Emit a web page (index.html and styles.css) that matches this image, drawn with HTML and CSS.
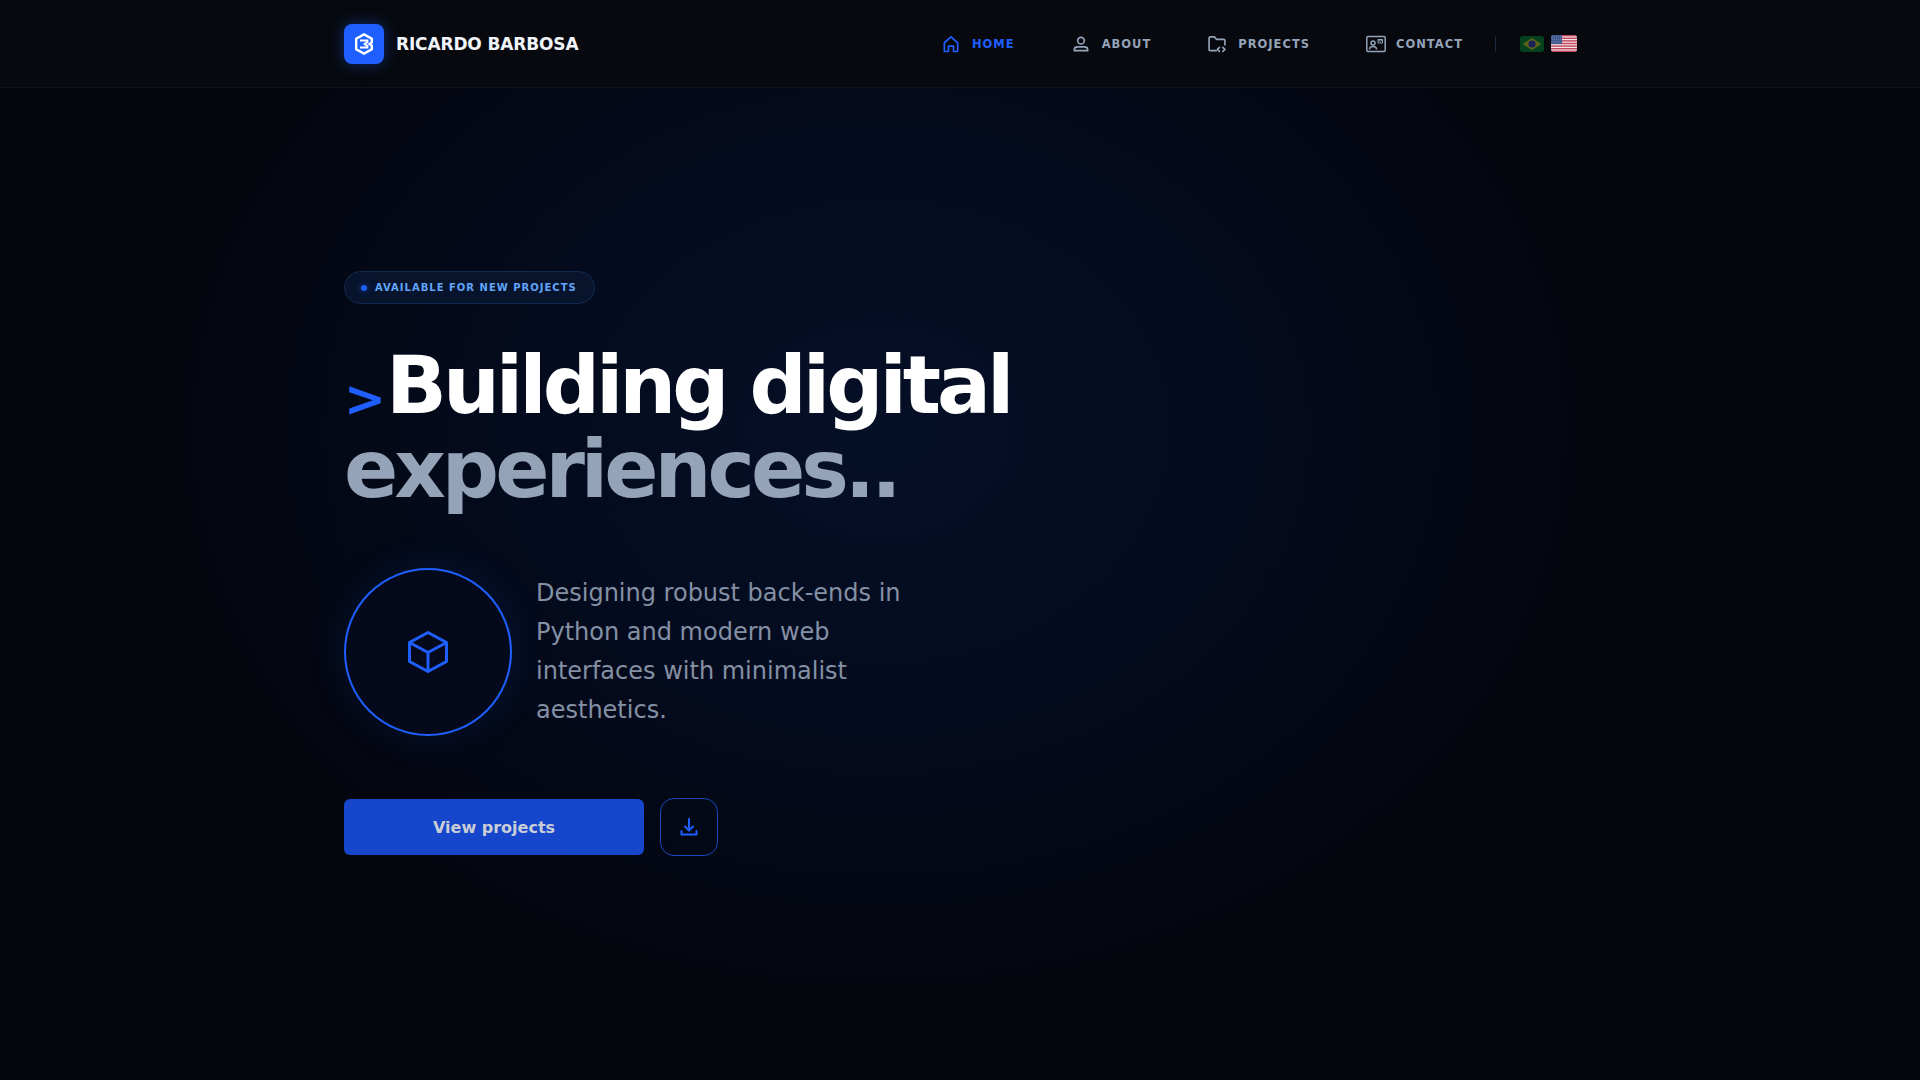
FILE: index.html
```html
<!DOCTYPE html>
<html lang="en">
  <head>
    <meta charset="UTF-8" />
    <meta name="viewport" content="width=device-width, initial-scale=1" />
    <title>Ricardo Barbosa</title>
    <link rel="stylesheet" href="styles.css">
  </head>
  <body>
    <header class="site-header">
      <div class="header-inner">
        <a class="brand">
          <span class="brand-logo">
            <svg width="24" height="24" viewBox="0 0 24 24" fill="none" stroke="white" stroke-width="2.4" stroke-linejoin="miter">
              <path d="M12 2.4 L19.8 6.8 V10.4 L17.4 12 L19.8 13.6 V17.2 L12 21.6 L4.2 17.2 V6.8 Z" />
              <path d="M8 8.6 H15.4 V10 L12.6 12 L15.4 14 V15.4 H8" stroke-width="2" />
            </svg>
          </span>
          <span class="brand-name">RICARDO BARBOSA</span>
        </a>

        <nav class="main-nav">
          <a class="nav-link active">
            <svg class="nav-icon" width="20" height="20" viewBox="0 0 24 24" fill="none" stroke="currentColor" stroke-width="2" stroke-linejoin="round">
              <path d="M4 10.5 L12 3.5 L20 10.5 V20 Q20 21 19 21 H15 V14.5 H9 V21 H5 Q4 21 4 20 Z" />
            </svg>
            HOME
          </a>
          <a class="nav-link">
            <svg class="nav-icon" width="20" height="20" viewBox="0 0 24 24" fill="none" stroke="currentColor" stroke-width="2" stroke-linejoin="round">
              <circle cx="12" cy="8" r="4" />
              <path d="M4 20 V18.5 Q4 15.5 8 15.5 H16 Q20 15.5 20 18.5 V20 Z" />
            </svg>
            ABOUT
          </a>
          <a class="nav-link">
            <svg class="nav-icon" width="20" height="20" viewBox="0 0 24 24" fill="none" stroke="currentColor" stroke-width="2" stroke-linecap="round" stroke-linejoin="round">
              <path d="M11 20 H4 Q2.5 20 2.5 18.5 V5 Q2.5 3.5 4 3.5 H9 L11.5 6.5 H20 Q21.5 6.5 21.5 8 V13" />
              <path d="M15 16 L12.5 18.5 L15 21 M19 16 L21.5 18.5 L19 21" />
            </svg>
            PROJECTS
          </a>
          <a class="nav-link contact-link">
            <svg class="nav-icon" width="20" height="18" viewBox="0 0 20 18" fill="none" stroke="currentColor" stroke-width="1.5" stroke-linejoin="round">
              <rect x="0.8" y="1.5" width="18.4" height="15" rx="1" />
              <circle cx="7" cy="8" r="2" />
              <path d="M3.5 14.5 Q3.5 11.5 7 11.5 Q10.5 11.5 10.5 14.5" />
              <path d="M12 4.5 H16.5 V8 H12 Z M12 4.5 L14.2 6.3 L16.5 4.5" stroke-width="1" />
            </svg>
            CONTACT
          </a>
          <span class="nav-divider"></span>
          <div class="lang-flags">
            <svg class="flag" width="24" height="16" viewBox="0 0 24 16">
              <rect width="24" height="16" fill="#07421f" />
              <path d="M12 2 L21.5 8 L12 14 L2.5 8 Z" fill="#5c6118" />
              <circle cx="12" cy="8" r="3.6" fill="#1a2158" />
            </svg>
            <svg class="flag" width="26" height="17" viewBox="0 0 26 17">
              <rect width="26" height="17" fill="#f3e4e6" />
              <rect y="0" width="26" height="1.4" fill="#c0455c" />
              <rect y="2.6" width="26" height="1.4" fill="#c0455c" />
              <rect y="5.2" width="26" height="1.4" fill="#c0455c" />
              <rect y="7.8" width="26" height="1.4" fill="#c0455c" />
              <rect y="10.4" width="26" height="1.4" fill="#c0455c" />
              <rect y="13" width="26" height="1.4" fill="#c0455c" />
              <rect y="15.6" width="26" height="1.4" fill="#c0455c" />
              <rect width="11" height="9" fill="#3f5a8e" />
              <path d="M1 2 H10.5 M1 4.5 H10.5 M1 7 H10.5" stroke="#8c9cc0" stroke-width="0.7" stroke-dasharray="0.8 1.2" />
            </svg>
          </div>
        </nav>
      </div>
    </header>

    <main class="hero">
      <div class="status-badge">
        <span class="status-dot"></span>
        AVAILABLE FOR NEW PROJECTS
      </div>

      <h1 class="hero-title">
        <span class="prompt">&gt;</span>Building digital<br />
        <span class="title-muted">experiences..</span>
      </h1>

      <div class="hero-intro">
        <div class="cube-circle">
          <svg width="48" height="48" viewBox="0 0 48 48" fill="none" stroke="#1f5fff" stroke-width="3" stroke-linejoin="round">
            <path d="M24 4.5 L42.5 14.5 V33.5 L24 43.5 L5.5 33.5 V14.5 Z" />
            <path d="M5.5 14.5 L24 24.5 L42.5 14.5 M24 24.5 V43.5" />
          </svg>
        </div>
        <p class="intro-text">Designing robust back-ends in Python and modern web interfaces with minimalist aesthetics.</p>
      </div>

      <div class="hero-actions">
        <button class="primary-button">View projects</button>
        <button class="download-button">
          <svg width="24" height="24" viewBox="0 0 24 24" fill="none" stroke="currentColor" stroke-width="2" stroke-linecap="round" stroke-linejoin="round">
            <path d="M12 4 V15 M8 11.5 L12 15.5 L16 11.5 M4.5 16 V19.5 H19.5 V16" />
          </svg>
        </button>
      </div>
    </main>
  </body>
</html>
```
FILE: styles.css
```css
* {
  box-sizing: border-box;
}

body {
  margin: 0;
  min-height: 100vh;
  font-family: "DejaVu Sans", sans-serif;
  color: white;
  background-color: #04050a;
  background-image: radial-gradient(ellipse 800px 640px at 880px 430px, #050f26 0%, #040b1e 45%, rgba(4, 5, 10, 0) 100%);
}

.site-header {
  height: 88px;
  background-color: #07090f;
  border-bottom: 1px solid #0b1320;
}

.header-inner {
  max-width: 1280px;
  height: 87px;
  margin: 0 auto;
  padding: 0 24px;
  display: flex;
  align-items: center;
  justify-content: space-between;
}

.brand {
  display: flex;
  align-items: center;
  gap: 12px;
}

.brand-logo {
  width: 40px;
  height: 40px;
  border-radius: 8px;
  background-color: #1f5fff;
  box-shadow: 0 0 15px rgba(31, 95, 255, 0.4);
  display: flex;
  align-items: center;
  justify-content: center;
}

.brand-name {
  font-size: 17px;
  font-weight: bold;
  letter-spacing: -0.15px;
  color: #f1f5f9;
}

.main-nav {
  display: flex;
  align-items: center;
}

.nav-link {
  display: flex;
  align-items: center;
  gap: 11px;
  margin-right: 56px;
  font-size: 11.5px;
  font-weight: bold;
  letter-spacing: 1px;
  color: #94a3b8;
}

.nav-link.active {
  color: #1f5fff;
}

.contact-link {
  gap: 10px;
}

.nav-divider {
  width: 1px;
  height: 16px;
  margin-left: -24px;
  background-color: #1e293b;
}

.lang-flags {
  display: flex;
  align-items: center;
  gap: 7px;
  margin-left: 24px;
  margin-right: -1px;
}

.flag {
  display: block;
  border-radius: 3px;
}

.hero {
  max-width: 1280px;
  margin: 0 auto;
  padding: 183px 24px 0;
}

.status-badge {
  display: inline-flex;
  align-items: center;
  gap: 8px;
  height: 33px;
  padding: 0 17px 0 16px;
  border: 1px solid #12294f;
  border-radius: 999px;
  background-color: #07142c;
  font-size: 10px;
  font-weight: bold;
  letter-spacing: 1px;
  color: #60a5fa;
}

.status-dot {
  width: 6px;
  height: 6px;
  border-radius: 50%;
  background-color: #1f5fff;
  box-shadow: 0 0 6px rgba(31, 95, 255, 0.6);
}

.hero-title {
  margin: 40px 0 0;
  font-size: 80px;
  line-height: 84px;
  letter-spacing: -4px;
  font-weight: bold;
}

.prompt {
  font-size: 50px;
  line-height: 1;
  letter-spacing: 0;
  color: #1f5fff;
  vertical-align: -3px;
}

.title-muted {
  color: #94a3b8;
}

.hero-intro {
  display: flex;
  align-items: center;
  gap: 24px;
  margin-top: 56px;
}

.cube-circle {
  width: 168px;
  height: 168px;
  flex-shrink: 0;
  border: 2px solid #1f5fff;
  border-radius: 50%;
  background-color: #040a1c;
  box-shadow: 0 0 40px rgba(31, 95, 255, 0.12);
  display: flex;
  align-items: center;
  justify-content: center;
}

.intro-text {
  width: 384px;
  margin: 0;
  font-size: 24px;
  line-height: 39px;
  color: #8490a4;
}

.hero-actions {
  display: flex;
  align-items: center;
  gap: 16px;
  margin-top: 62px;
}

.primary-button {
  width: 300px;
  height: 56px;
  border: none;
  border-radius: 6px;
  background-color: #1546cc;
  font-family: inherit;
  font-size: 16px;
  font-weight: bold;
  color: #c9cdd6;
}

.download-button {
  width: 58px;
  height: 58px;
  border: 1px solid #1a46bd;
  border-radius: 14px;
  background-color: transparent;
  color: #1f5fff;
  display: flex;
  align-items: center;
  justify-content: center;
}
```
